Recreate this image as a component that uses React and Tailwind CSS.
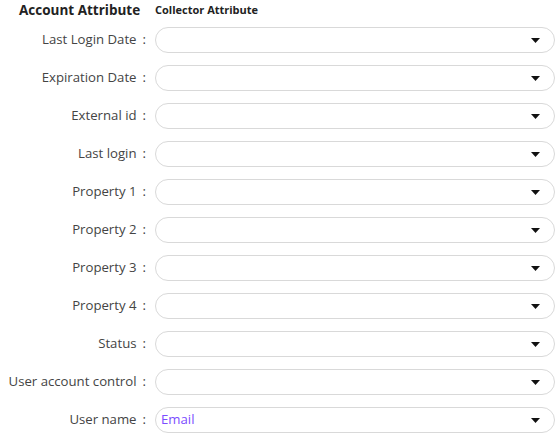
import React from "react";

const fields = [
  { label: "Last Login Date", value: "" },
  { label: "Expiration Date", value: "" },
  { label: "External id", value: "" },
  { label: "Last login", value: "" },
  { label: "Property 1", value: "" },
  { label: "Property 2", value: "" },
  { label: "Property 3", value: "" },
  { label: "Property 4", value: "" },
  { label: "Status", value: "" },
  { label: "User account control", value: "" },
  { label: "User name", value: "Email" },
];

const Caret = () => (
  <svg width="9" height="5" viewBox="0 0 9 5" className="shrink-0">
    <path d="M0 0 H9 L4.5 5 Z" fill="#111" />
  </svg>
);

const App = () => {
  return (
    <div
      className="w-[560px] h-[440px] bg-white text-[13.2px] text-[#444]"
      style={{ fontFamily: '"Open Sans", "Noto Sans", sans-serif' }}
    >
      {/* Header */}
      <div className="h-[21px] flex items-center">
        <div className="w-[146px] pl-[19px] text-[13.5px] font-bold text-[#222] whitespace-nowrap">
          Account Attribute
        </div>
        <div className="ml-[9px] text-[11px] font-bold text-[#222]">
          Collector Attribute
        </div>
      </div>

      {/* Rows */}
      <div className="mt-[6px] flex flex-col gap-[12px]">
        {fields.map((f) => (
          <div key={f.label} className="flex items-center h-[26px]">
            <div className="w-[146px] flex justify-end items-center whitespace-nowrap">
              <span>{f.label}</span>
              <span className="ml-[6px]">:</span>
            </div>
            <div className="ml-[9px] w-[400px] h-[26px] rounded-full border border-[#d9d9d9] flex items-center justify-between pl-[5px] pr-[14px]">
              <span className="text-[#7c4dff]">{f.value}</span>
              <Caret />
            </div>
          </div>
        ))}
      </div>
    </div>
  );
};

export default App;
